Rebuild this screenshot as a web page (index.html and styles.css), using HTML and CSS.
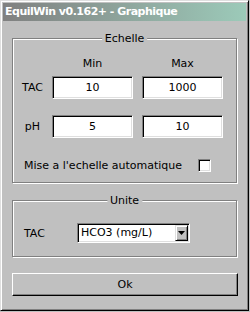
FILE: index.html
```html
<!DOCTYPE html>
<html>
<head>
<meta charset="utf-8">
<link rel="stylesheet" href="styles.css">
</head>
<body>
<div class="win">
  <div class="titlebar">EquilWin v0.162+ - Graphique</div>
  <div class="group g1">
    <span class="legend">Echelle</span>
    <div class="row head">
      <span class="lbl"></span>
      <span class="cell">Min</span>
      <span class="cell">Max</span>
    </div>
    <div class="row r1">
      <span class="lbl">TAC</span>
      <input class="cell field" type="text" value="10" readonly>
      <input class="cell field" type="text" value="1000" readonly>
    </div>
    <div class="row r2">
      <span class="lbl">pH</span>
      <input class="cell field" type="text" value="5" readonly>
      <input class="cell field" type="text" value="10" readonly>
    </div>
    <div class="check-row">
      <span class="check-text">Mise a l'echelle automatique</span>
      <span class="checkbox"></span>
    </div>
  </div>
  <div class="group g2">
    <span class="legend">Unite</span>
    <div class="unit-row">
      <span class="unit-lbl">TAC</span>
      <div class="combo">
        <span class="combo-text">HCO3 (mg/L)</span>
        <span class="combo-btn"><svg width="7" height="4" viewBox="0 0 7 4"><path d="M0 0h7L3.5 4z" fill="#000"/></svg></span>
      </div>
    </div>
  </div>
  <div class="btn">Ok</div>
</div>
</body>
</html>
```

FILE: styles.css
```css
html, body {
  margin: 0;
  padding: 0;
  background: #c0c0c0;
}
body {
  font-family: "DejaVu Sans", Verdana, sans-serif;
  font-size: 11px;
  color: #000;
}
.win {
  width: 249px;
  height: 311px;
  box-sizing: border-box;
  border: 1px solid;
  border-color: #dfdfdf #000 #000 #dfdfdf;
  box-shadow: inset 1px 1px #fff, inset -1px -1px #808080;
  padding: 2px;
  background: #c0c0c0;
}
.titlebar {
  height: 18px;
  line-height: 18px;
  background: linear-gradient(to right, #808080, #9ccab9);
  color: #fff;
  font-weight: bold;
  font-size: 11px;
  padding-left: 2px;
  letter-spacing: -0.5px;
  white-space: nowrap;
}
.group {
  position: relative;
  margin-left: 9px;
  width: 225px;
  box-sizing: border-box;
  border: 1px solid #808080;
  box-shadow: inset 1px 1px #fff, 1px 1px #fff;
}
.g1 {
  margin-top: 17px;
  height: 145px;
  padding-top: 18px;
}
.g2 {
  margin-top: 17px;
  height: 57px;
  padding-top: 22px;
}
.legend {
  position: absolute;
  top: -7px;
  left: 50%;
  transform: translateX(-50%);
  background: #c0c0c0;
  padding: 0 3px;
  line-height: 13px;
  white-space: nowrap;
}
.row {
  display: flex;
  align-items: center;
}
.lbl {
  width: 39px;
  text-align: center;
}
.cell {
  width: 81px;
  text-align: center;
}
.cell + .cell {
  margin-left: 9px;
}
.head {
  height: 13px;
  line-height: 13px;
}
.r1 { margin-top: 6px; }
.r2 { margin-top: 16px; }
.field {
  box-sizing: border-box;
  height: 23px;
  margin: 0;
  padding: 0;
  border: 1px solid;
  border-color: #808080 #fff #fff #808080;
  box-shadow: inset 1px 1px #000, inset -1px -1px #dfdfdf;
  background: #fff;
  font: inherit;
  color: #000;
  outline: none;
}
.check-row {
  display: flex;
  align-items: center;
  justify-content: space-between;
  margin-top: 21px;
  padding-left: 11px;
  padding-right: 25px;
  height: 13px;
}
.checkbox {
  width: 13px;
  height: 13px;
  box-sizing: border-box;
  border: 1px solid;
  border-color: #808080 #fff #fff #808080;
  box-shadow: inset 1px 1px #000, inset -1px -1px #dfdfdf;
  background: #fff;
}
.unit-row {
  display: flex;
  align-items: center;
  padding-left: 11px;
}
.unit-lbl {
  width: 53px;
}
.combo {
  width: 113px;
  height: 20px;
  box-sizing: border-box;
  border: 1px solid;
  border-color: #808080 #fff #fff #808080;
  box-shadow: inset 1px 1px #000, inset -1px -1px #dfdfdf;
  background: #fff;
  display: flex;
  align-items: stretch;
  padding: 1px;
}
.combo-text {
  flex: 1;
  padding-left: 2px;
  line-height: 16px;
}
.combo-btn {
  width: 13px;
  box-sizing: border-box;
  background: #c0c0c0;
  border: 1px solid;
  border-color: #dfdfdf #000 #000 #dfdfdf;
  box-shadow: inset 1px 1px #fff, inset -1px -1px #808080;
  display: flex;
  align-items: center;
  justify-content: center;
}
.btn {
  margin-top: 16px;
  margin-left: 9px;
  width: 226px;
  height: 23px;
  box-sizing: border-box;
  border: 1px solid;
  border-color: #fff #000 #000 #fff;
  box-shadow: inset -1px -1px #808080;
  text-align: center;
  line-height: 21px;
}
```
